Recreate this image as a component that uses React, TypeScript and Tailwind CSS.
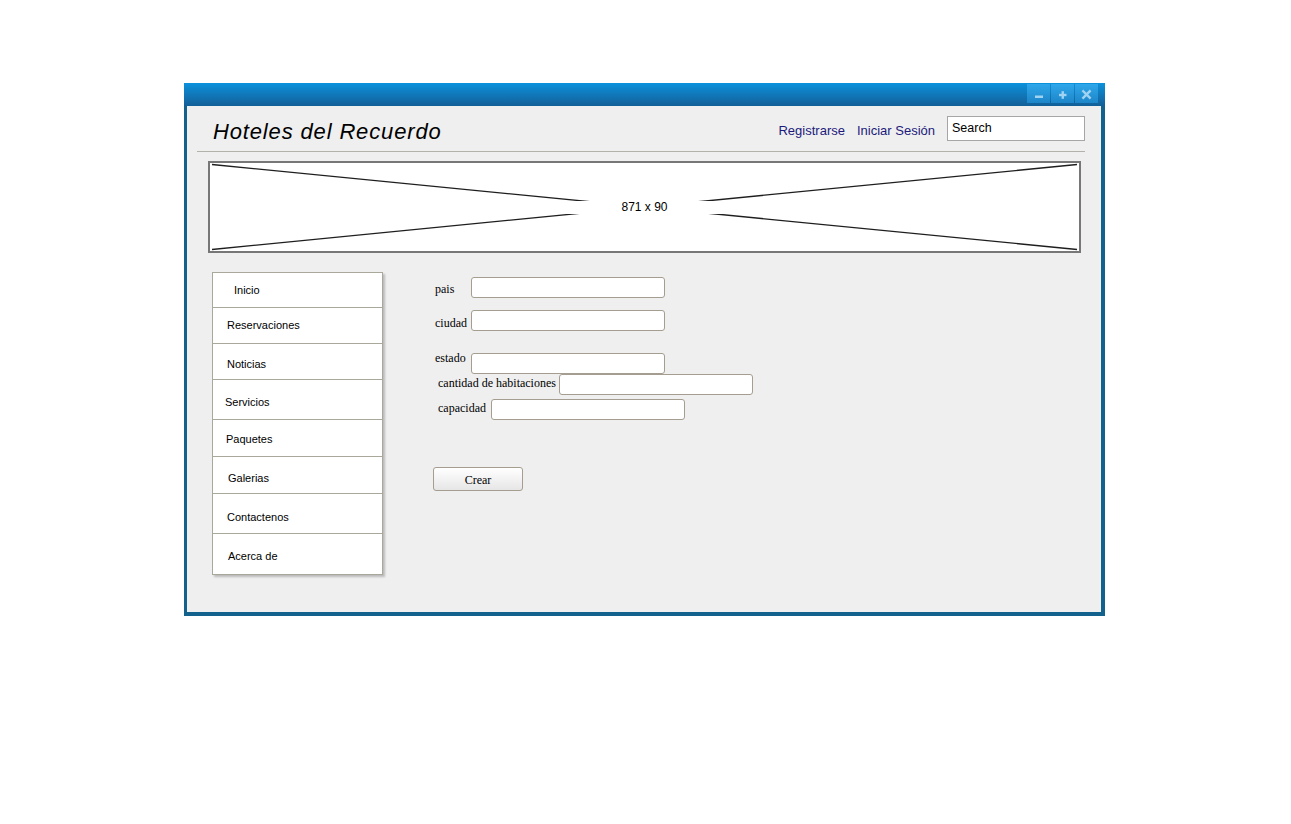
import React from "react";

const navItems: [string, string][] = [
  ["Inicio", "h-[35px] pl-[21px] pt-0"],
  ["Reservaciones", "h-[36px] pl-[14px] pt-0"],
  ["Noticias", "h-[36px] pl-[14px] pt-[6px]"],
  ["Servicios", "h-[40px] pl-[12px] pt-[5px]"],
  ["Paquetes", "h-[37px] pl-[13px] pt-[3px]"],
  ["Galerias", "h-[37px] pl-[15px] pt-[6px]"],
  ["Contactenos", "h-[40px] pl-[14px] pt-[7px]"],
  ["Acerca de", "h-[40px] pl-[15px] pt-[5px]"],
];

function TitleButtons() {
  return (
    <div className="flex gap-[1px] pt-[1px] pr-[7px]">
      <div className="w-[23px] h-[19px] bg-linear-to-b from-[#2ea7ea] to-[#1d86c9]">
        <svg width="23" height="19" viewBox="0 0 23 19">
          <rect x="8" y="11.5" width="8" height="2.5" fill="#9fd3f1" />
        </svg>
      </div>
      <div className="w-[23px] h-[19px] bg-linear-to-b from-[#2ea7ea] to-[#1d86c9]">
        <svg width="23" height="19" viewBox="0 0 23 19">
          <rect x="8" y="9.8" width="7.5" height="2.4" fill="#9fd3f1" />
          <rect x="10.55" y="7.2" width="2.4" height="7.6" fill="#9fd3f1" />
        </svg>
      </div>
      <div className="w-[23px] h-[19px] bg-linear-to-b from-[#2ea7ea] to-[#1d86c9]">
        <svg width="23" height="19" viewBox="0 0 23 19">
          <path d="M8.3 7.3 L14.7 13.7 M14.7 7.3 L8.3 13.7" stroke="#9fd3f1" strokeWidth="2.4" strokeLinecap="square" />
        </svg>
      </div>
    </div>
  );
}

function Field({ cls }: { cls: string }) {
  return (
    <input
      readOnly
      className={`h-[21px] bg-white border border-[#a59d8f] rounded-[3px] outline-none ${cls}`}
    />
  );
}

export default function App() {
  return (
    <div className="min-h-screen bg-white pt-[83px] pl-[184px]" style={{ fontFamily: '"Liberation Sans", Arial, sans-serif' }}>
      <div className="w-[921px] h-[533px] flex flex-col">
        {/* Title bar */}
        <div className="h-[23px] bg-linear-to-b from-[#0a92dc] to-[#125f98] flex justify-end items-start">
          <TitleButtons />
        </div>
        {/* Body */}
        <div className="flex-1 bg-[#efefef] border-l-[3px] border-r-[4px] border-b-[4px] border-[#13628e] flex flex-col">
          {/* Header */}
          <div className="h-[45px] flex items-start justify-between pl-[26px] pr-[16px]">
            <div className="mt-[13px] text-[22px] leading-[25px] italic tracking-[0.85px] text-black">
              Hoteles del Recuerdo
            </div>
            <div className="flex items-start">
              <span className="mt-[17px] text-[13px] leading-[15px] text-[#1c1a7c]">Registrarse</span>
              <span className="mt-[17px] ml-[12px] text-[13px] leading-[15px] text-[#1c1a7c]">Iniciar Sesión</span>
              <div className="mt-[10px] ml-[12px] w-[138px] h-[25px] bg-white border border-[#a6a6a6] pl-[4px] flex items-center">
                <span className="text-[12.5px] leading-[15px] text-black">Search</span>
              </div>
            </div>
          </div>
          {/* Separator */}
          <div className="ml-[10px] mr-[16px] h-px bg-[#b3b2aa]" />
          {/* Image placeholder */}
          <div className="mt-[9px] ml-[21px] w-[873px] h-[92px] border-2 border-[#777777] bg-white relative flex items-center justify-center">
            <svg className="absolute inset-0" width="869" height="88" viewBox="0 0 869 88">
              <line x1="2" y1="1.5" x2="867" y2="86.5" stroke="#1e1e1e" strokeWidth="1.3" />
              <line x1="2" y1="86.5" x2="867" y2="1.5" stroke="#1e1e1e" strokeWidth="1.3" />
            </svg>
            <span className="relative bg-white px-[60px] py-[0.5px] text-[12px] leading-[12px] text-black">871 x 90</span>
          </div>
          {/* Main */}
          <div className="mt-[19px] flex items-start">
            {/* Sidebar */}
            <div className="ml-[25px] w-[171px] bg-white border border-[#aaa89a] shadow-[2px_2px_2px_rgba(0,0,0,0.22)] flex flex-col">
              {navItems.map(([label, cls]) => (
                <div
                  key={label}
                  className={`${cls} flex items-center border-b border-[#aaa89a] last:border-b-0 text-[11px] leading-[13px] text-black`}
                >
                  {label}
                </div>
              ))}
            </div>
            {/* Form */}
            <div
              className="ml-[50px] mt-[5px] flex flex-col text-[12px] leading-[14px] text-black"
              style={{ fontFamily: '"Liberation Serif", "Times New Roman", serif' }}
            >
              <div className="flex items-start">
                <span className="w-[38px] pl-[2px] mt-[5px]">pais</span>
                <Field cls="w-[194px]" />
              </div>
              <div className="flex items-start mt-[12px]">
                <span className="w-[38px] pl-[2px] mt-[6px]">ciudad</span>
                <Field cls="w-[194px]" />
              </div>
              <div className="flex items-start mt-[19px]">
                <span className="w-[38px] pl-[2px] mt-[1px]">estado</span>
                <Field cls="w-[194px] mt-[3px]" />
              </div>
              <div className="flex items-start mt-0">
                <span className="w-[126px] pl-[5px] mt-[2px]">cantidad de habitaciones</span>
                <Field cls="w-[194px]" />
              </div>
              <div className="flex items-start mt-[4px]">
                <span className="w-[58px] pl-[5px] mt-[2px]">capacidad</span>
                <Field cls="w-[194px]" />
              </div>
              <button className="mt-[47px] w-[90px] h-[24px] rounded-[3px] border border-[#a59d8f] bg-linear-to-b from-[#ffffff] to-[#e6e6e6] text-[12px] text-black flex items-center justify-center pt-[1px]">
                Crear
              </button>
            </div>
          </div>
        </div>
      </div>
    </div>
  );
}
